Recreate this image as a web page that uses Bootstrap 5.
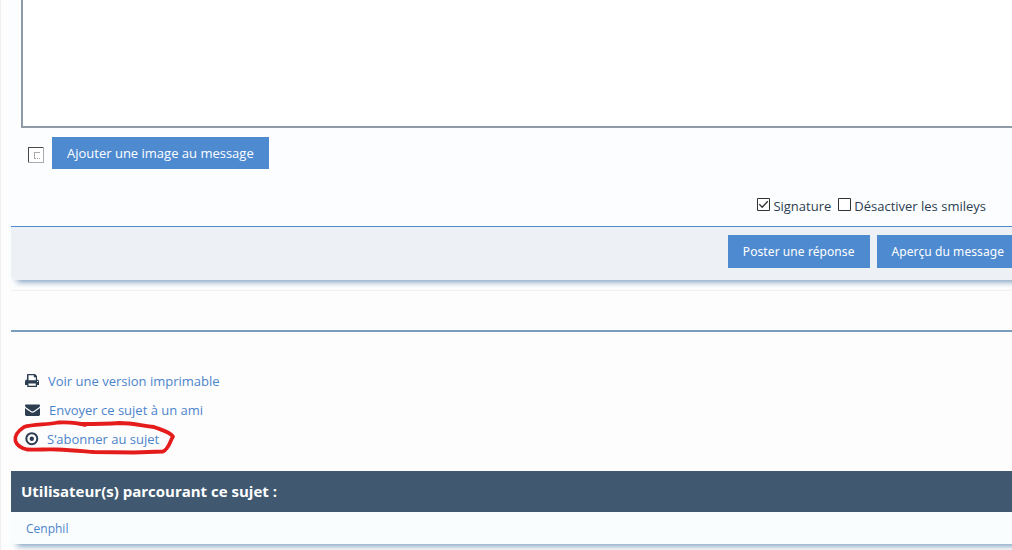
<!DOCTYPE html>
<html lang="fr">
<head>
  <meta charset="UTF-8">
  <title>Répondre au sujet</title>
  <link href="https://cdn.jsdelivr.net/npm/bootstrap@5.3.0/dist/css/bootstrap.min.css" rel="stylesheet">

  <style>
    html, body {
      height: 100%;
      overflow: hidden;
    }

    body {
      font-family: "Open Sans", "Liberation Sans", sans-serif;
      font-size: 13px;
      line-height: 20px;
      color: #2c3e50;
      background-color: #fdfdfd;
    }

    a {
      color: #4c84cc;
      text-decoration: none;
    }

    /* The forum is wider than the window, the right side is cut */
    .forum-page {
      width: 1040px;
      height: 550px;
      border-left: 1px solid #f0f0f0;
      padding-left: 10px;
      overflow: hidden;
    }

    .reply-panel {
      height: 280px;
      background-color: #fcfdff;
      border-radius: 0 0 5px 5px;
      box-shadow: 0 8px 6px -6px #7b9dbd;
    }

    .message-box {
      display: block;
      height: 128px;
      margin-left: 10px;
      width: 1019px;
      border: 2px solid #8f9aa7;
      border-top: 0;
      border-radius: 0;
      background-color: #fff;
      resize: none;
      outline: none;
    }

    .btn-forum {
      --bs-btn-color: #fff;
      --bs-btn-bg: #4e8ad0;
      --bs-btn-border-width: 0;
      --bs-btn-border-radius: 0;
      --bs-btn-padding-x: 15px;
      --bs-btn-padding-y: 0;
      --bs-btn-font-size: 13px;
      --bs-btn-hover-color: #fff;
      --bs-btn-hover-bg: #3f78bb;
      height: 32px;
      white-space: nowrap;
    }

    .attach-row {
      padding: 9px 0 0 17px;
    }

    .attach-row .btn-forum {
      padding-top: 2px;
    }

    .missing-image {
      width: 16px;
      height: 16px;
      margin: 3px 8px 0 0;
    }

    .reply-options {
      height: 57px;
      padding: 27px 54px 0 0;
    }

    .reply-options svg {
      width: 13px;
      height: 13px;
      margin: 2px 3px 0 0;
    }

    .reply-options .opt-signature {
      margin-right: 7px;
    }

    .reply-actions {
      height: 54px;
      padding: 8px 21px 0 0;
      gap: 7px;
      border-top: 1px solid #4e8ad0;
      border-radius: 0 0 5px 5px;
      background-color: #edf1f6;
    }

    .reply-actions .btn-forum {
      height: 33px;
      font-family: "Noto Sans", "Open Sans", sans-serif;
      font-size: 12px;
      letter-spacing: .08px;
    }

    .thin-rule {
      height: 11px;
      border-bottom: 1px solid #f0f0f0;
    }

    .thick-rule {
      height: 41px;
      border-bottom: 2px solid #7b9dbd;
    }

    .topic-tools {
      position: relative;
      height: 139px;
      padding: 39px 0 0 14px;
    }

    .topic-tools li {
      height: 29px;
      display: flex;
    }

    .topic-tools li svg {
      height: 15px;
      margin-top: 3px;
    }

    /* Hand drawn circle laid over the last link */
    .red-circle {
      position: absolute;
      left: 0;
      top: 86px;
      pointer-events: none;
    }

    .viewers {
      border-radius: 0 0 5px 5px;
      box-shadow: 0 8px 6px -6px #7b9dbd;
    }

    .viewers-title {
      height: 41px;
      padding-left: 10px;
      line-height: 41px;
      font-size: 15px;
      font-weight: 700;
      color: #fff;
      background-color: #405971;
    }

    .viewers-list {
      height: 32px;
      padding-left: 15px;
      line-height: 33px;
      font-size: 12px;
      background-color: #f9fdfe;
      border-radius: 0 0 5px 5px;
    }
  </style>
</head>
<body>
  <div class="forum-page">
    <!-- Reply form -->
    <form class="reply-panel">
      <textarea class="message-box" aria-label="Message"></textarea>

      <div class="attach-row d-flex align-items-center">
        <svg class="missing-image" viewBox="0 0 16 16" shape-rendering="crispEdges">
          <path fill="#fff" d="M0 0h16v16H0z"/>
          <path fill="none" stroke="#aaa" d="M15.5 0v15.5H0"/>
          <path fill="none" stroke="#484848" d="M15 .5H.5V15"/>
          <path fill="none" stroke="#aaa" d="M12 5.500H6.500V12M7 11.500h1M9 11.500h1M11 11.500h1"/>
        </svg>
        <button type="button" class="btn btn-forum">Ajouter une image au message</button>
      </div>

      <div class="reply-options d-flex justify-content-end">
        <svg viewBox="0 0 13 13"><path fill="#fff" stroke="#333" d="M.5.5h12v12H.5z"/><path fill="none" stroke="#333" stroke-width="1.300" d="M2.300 6.300l2.900 2.900L10.800 3.300"/></svg>
        <span class="opt-signature">Signature</span>
        <svg viewBox="0 0 13 13"><path fill="#fff" stroke="#333" d="M.5.5h12v12H.5z"/></svg>
        <span>Désactiver les smileys</span>
      </div>

      <div class="reply-actions d-flex justify-content-end">
        <button type="button" class="btn btn-forum">Poster une réponse</button>
        <button type="button" class="btn btn-forum">Aperçu du message</button>
      </div>
    </form>

    <div class="thin-rule"></div>
    <div class="thick-rule"></div>

    <!-- Topic tools -->
    <div class="topic-tools">
      <ul class="list-unstyled m-0">
        <li>
          <svg width="23" viewBox="0 0 23 15">
            <path fill="#2c3e50" fill-rule="evenodd" d="M2.500 0h7.500L12 2V5.600a2 2 0 0 1 2 2V11H12v2H2.200v-2H0V7.600a2 2 0 0 1 2-2V.5zM3.500 1.200V6.300H10.800V3.200H8.800V1.200zM3.500 9.500v2.200h7.300V9.500zM12 6.900v1h1v-1z"/>
          </svg>
          <a href="#">Voir une version imprimable</a>
        </li>
        <li>
          <svg width="24" viewBox="0 0 24 15">
            <path fill="#2c3e50" d="M.9 1.500h13.200q.9 0 .9.900c0 1-.8 1.800-1.600 2.400L9.200 7.700c-1.200.9-2.200.9-3.400 0L1.600 4.800C.8 4.200 0 3.300 0 2.400q0-.9.900-.9zM0 5.100c2 1.700 3.700 2.700 5.500 4 1.300.9 2.700.9 4 0 1.800-1.300 3.700-2.500 5.500-4v6.500q0 1.400-1.400 1.400H1.400Q0 13 0 11.600z"/>
          </svg>
          <a href="#">Envoyer ce sujet à un ami</a>
        </li>
        <li>
          <svg width="22" viewBox="0 0 22 15">
            <circle cx="6.800" cy="6.700" r="5.500" fill="none" stroke="#2c3e50" stroke-width="2"/>
            <circle cx="6.800" cy="6.700" r="2.200" fill="#2c3e50"/>
          </svg>
          <a href="#">S’abonner au sujet</a>
        </li>
      </ul>
      <svg class="red-circle" width="170" height="42" viewBox="11 418 170 42" fill="none" stroke="#e51c1c" stroke-width="3.800" stroke-linecap="round" stroke-linejoin="round">
        <path d="M85 425C79 423 72 422 58 422.500C48 425 33 424 24 427C18 431 14 435 15.500 441C17 446 21 448 27 449.500C38 450 47 449 57 449.500C71 450 81 451 94 452L134 452.500L163 451.500C169 449 170 441 173 436.500C170 432 162 430 154 427C139 425 131 423 119 423C107 424 94 424 80 424"/>
      </svg>
    </div>

    <!-- Who is reading the topic -->
    <div class="viewers">
      <div class="viewers-title">Utilisateur(s) parcourant ce sujet :</div>
      <div class="viewers-list"><a href="#">Cenphil</a></div>
    </div>
  </div>

  <script src="https://cdn.jsdelivr.net/npm/bootstrap@5.3.0/dist/js/bootstrap.bundle.min.js"></script>
</body>
</html>
